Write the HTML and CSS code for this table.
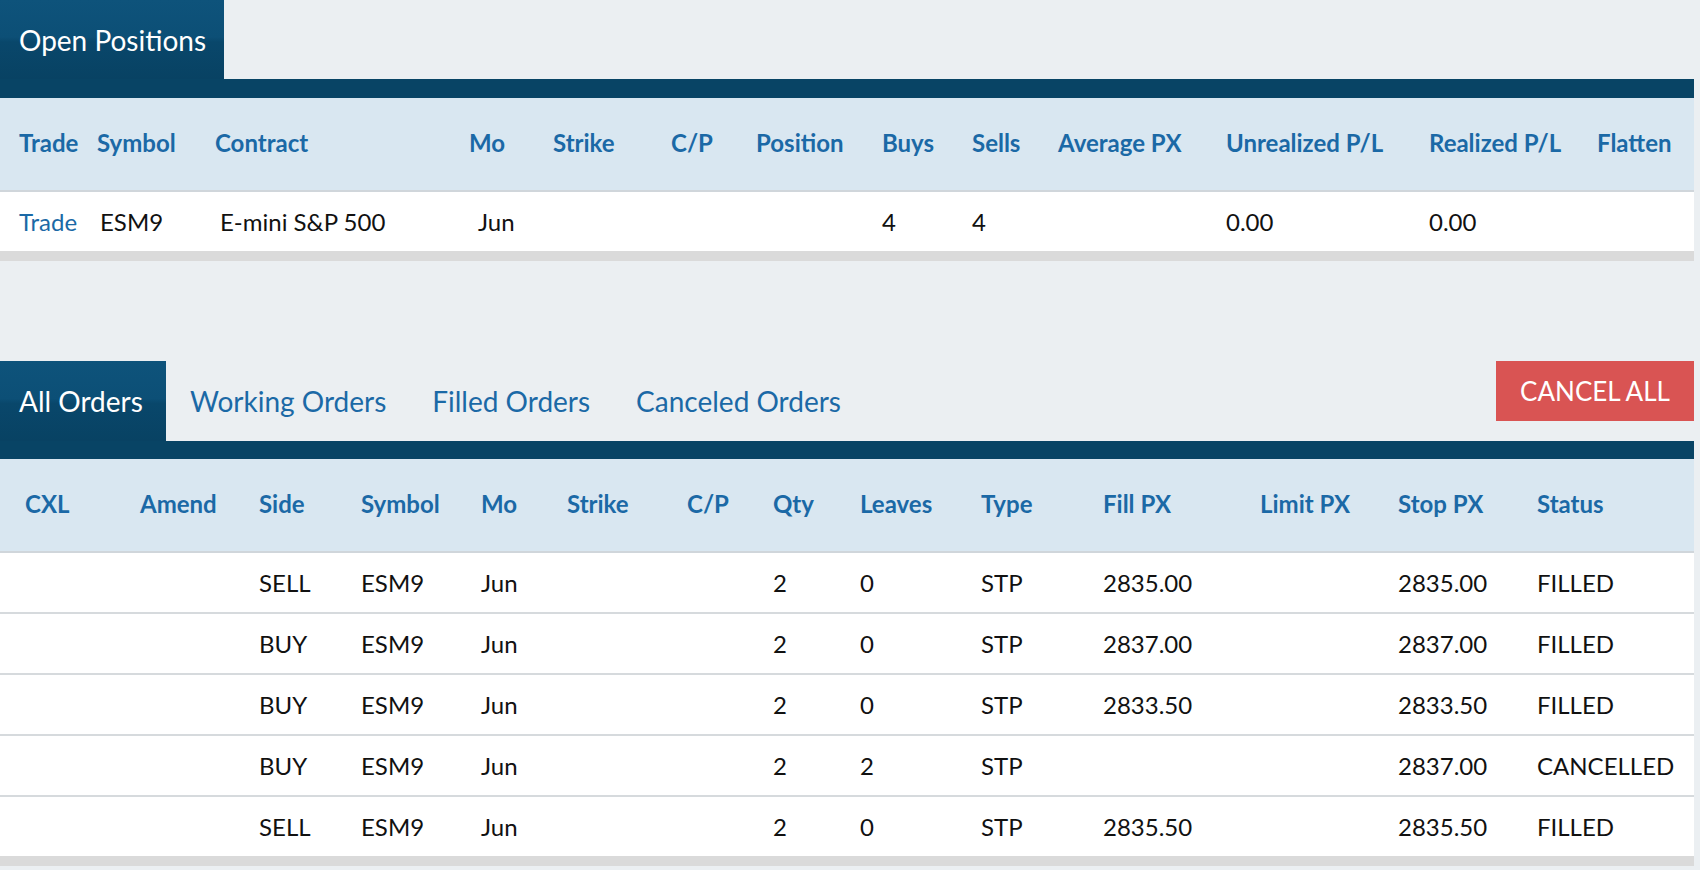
FILE: index.html
```html
<!DOCTYPE html>
<html>
<head>
<meta charset="utf-8">
<title>Positions</title>
<link rel="stylesheet" href="styles.css">
</head>
<body>
<div class="page">
  <section class="panel positions">
    <div class="tabbar">
      <div class="tab active">Open Positions</div>
    </div>
    <div class="bar"></div>
    <table class="grid">
      <colgroup>
        <col style="width:78px"><col style="width:118px"><col style="width:254px"><col style="width:84px"><col style="width:118px"><col style="width:85px"><col style="width:126px"><col style="width:90px"><col style="width:86px"><col style="width:168px"><col style="width:203px"><col style="width:168px"><col>
      </colgroup>
      <thead>
        <tr><th>Trade</th><th>Symbol</th><th>Contract</th><th>Mo</th><th>Strike</th><th>C/P</th><th>Position</th><th>Buys</th><th>Sells</th><th>Average PX</th><th>Unrealized P/L</th><th>Realized P/L</th><th>Flatten</th></tr>
      </thead>
      <tbody>
        <tr><td><a class="link" href="#">Trade</a></td><td>ESM9</td><td>E-mini S&amp;P 500</td><td>Jun</td><td></td><td></td><td></td><td>4</td><td>4</td><td></td><td>0.00</td><td>0.00</td><td></td></tr>
      </tbody>
    </table>
  </section>

  <section class="panel orders">
    <div class="tabbar">
      <div class="tab active">All Orders</div>
      <div class="tab">Working Orders</div>
      <div class="tab">Filled Orders</div>
      <div class="tab">Canceled Orders</div>
      <button class="cancel-all">CANCEL ALL</button>
    </div>
    <div class="bar"></div>
    <table class="grid">
      <colgroup>
        <col style="width:115px"><col style="width:119px"><col style="width:102px"><col style="width:120px"><col style="width:86px"><col style="width:120px"><col style="width:86px"><col style="width:87px"><col style="width:121px"><col style="width:122px"><col style="width:157px"><col style="width:138px"><col style="width:139px"><col>
      </colgroup>
      <thead>
        <tr><th>CXL</th><th>Amend</th><th>Side</th><th>Symbol</th><th>Mo</th><th>Strike</th><th>C/P</th><th>Qty</th><th>Leaves</th><th>Type</th><th>Fill PX</th><th>Limit PX</th><th>Stop PX</th><th>Status</th></tr>
      </thead>
      <tbody>
        <tr><td></td><td></td><td>SELL</td><td>ESM9</td><td>Jun</td><td></td><td></td><td>2</td><td>0</td><td>STP</td><td>2835.00</td><td></td><td>2835.00</td><td>FILLED</td></tr>
        <tr><td></td><td></td><td>BUY</td><td>ESM9</td><td>Jun</td><td></td><td></td><td>2</td><td>0</td><td>STP</td><td>2837.00</td><td></td><td>2837.00</td><td>FILLED</td></tr>
        <tr><td></td><td></td><td>BUY</td><td>ESM9</td><td>Jun</td><td></td><td></td><td>2</td><td>0</td><td>STP</td><td>2833.50</td><td></td><td>2833.50</td><td>FILLED</td></tr>
        <tr><td></td><td></td><td>BUY</td><td>ESM9</td><td>Jun</td><td></td><td></td><td>2</td><td>2</td><td>STP</td><td></td><td></td><td>2837.00</td><td>CANCELLED</td></tr>
        <tr><td></td><td></td><td>SELL</td><td>ESM9</td><td>Jun</td><td></td><td></td><td>2</td><td>0</td><td>STP</td><td>2835.50</td><td></td><td>2835.50</td><td>FILLED</td></tr>
      </tbody>
    </table>
  </section>
</div>
</body>
</html>
```

FILE: styles.css
```css
html, body {
  margin: 0;
  padding: 0;
  background: #ebeff2;
  font-family: Lato, "Open Sans", sans-serif;
  color: #111;
}

.page {
  width: 1694px;
}

.panel {
  display: flex;
  flex-direction: column;
}

.orders {
  margin-top: 100px;
}

.tabbar {
  display: flex;
  align-items: stretch;
  height: 80px;
}

.positions .tabbar {
  height: 79px;
}

.tab {
  display: flex;
  align-items: center;
  padding: 0 21px 0 19px;
  font-size: 28px;
  color: #1b69a6;
  white-space: nowrap;
}

.tab + .tab {
  padding-left: 24px;
  padding-right: 22px;
}

.tab.active {
  color: #fff;
  background: linear-gradient(to bottom, #0e537b 0%, #0c4f76 47%, #09476b 53%, #084263 100%);
}

.positions .tab.active {
  width: 224px;
  box-sizing: border-box;
}

.orders .tab.active {
  width: 166px;
  box-sizing: border-box;
}

.cancel-all {
  margin-left: auto;
  height: 60px;
  width: 198px;
  border: 0;
  background: #d95453;
  color: #fff;
  font-family: Lato, "Open Sans", sans-serif;
  font-size: 26px;
  padding: 0;
  cursor: pointer;
}

.bar {
  height: 19px;
  background: #084465;
}

.orders .bar {
  height: 18px;
}

.grid {
  width: 100%;
  border-collapse: collapse;
  table-layout: fixed;
  background: #fff;
  border-bottom: 10px solid #dadada;
}

.grid th {
  height: 89px;
  padding: 0 0 3px 19px;
  background: #d9e7f1;
  color: #1b69a6;
  font-weight: 700;
  font-size: 24px;
  text-align: left;
  white-space: nowrap;
  border-bottom: 2px solid #d0d6db;
}

.orders .grid th,
.orders .grid td {
  padding-left: 25px;
}

.grid td {
  height: 58px;
  padding: 0 0 1px 19px;
  font-size: 24px;
  white-space: nowrap;
  border-top: 2px solid #d6dadd;
}

.positions .grid td:nth-child(2) { padding-left: 22px; }
.positions .grid td:nth-child(3) { padding-left: 24px; }
.positions .grid td:nth-child(4) { padding-left: 28px; }

.grid tbody tr:first-child td {
  border-top: 0;
}

.link {
  color: #1b69a6;
  text-decoration: none;
}
```
